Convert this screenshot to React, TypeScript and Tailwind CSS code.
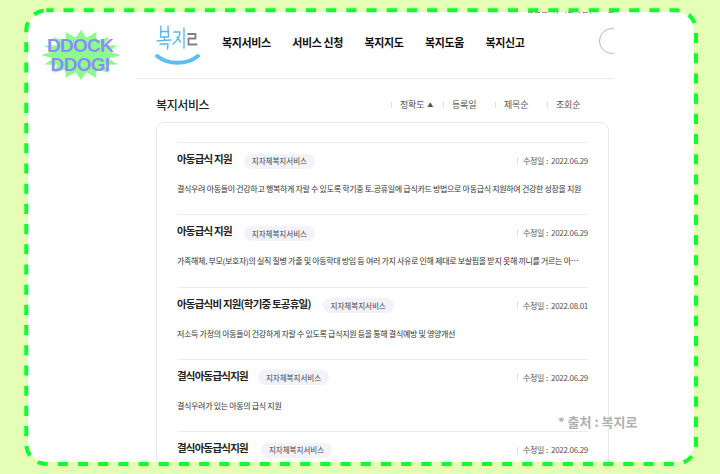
const items = [
  { t: "아동급식 지원", d: "결식우려 아동들이 건강하고 행복하게 자랄 수 있도록 학기중 토.공휴일에 급식카드 방법으로 아동급식 지원하여 건강한 성장을 지원", date: "2022.06.29" },
  { t: "아동급식 지원", d: "가족해체, 부모(보호자)의 실직 질병 가출 및 아동학대 방임 등 여러 가지 사유로 인해 제대로 보살핌을 받지 못해 끼니를 거르는 아동에게 급식을 지원", date: "2022.06.29" },
  { t: "아동급식비 지원(학기중 토공휴일)", d: "저소득 가정의 아동들이 건강하게 자랄 수 있도록 급식지원 등을 통해 결식예방 및 영양개선", date: "2022.08.01" },
  { t: "결식아동급식지원", d: "결식우려가 있는 아동의 급식 지원", date: "2022.06.29" },
  { t: "결식아동급식지원", d: "", date: "2022.06.29" },
];
const nav = ["복지서비스", "서비스 신청", "복지지도", "복지도움", "복지신고"];
const sorts = ["정확도", "등록일", "제목순", "조회순"];
const font = { fontFamily: '"Noto Sans CJK KR", "Noto Sans", sans-serif' };

function Starburst() {
  const pts: string[] = [];
  const n = 16;
  for (let i = 0; i < n * 2; i++) {
    const a = (Math.PI * i) / n - Math.PI / 2;
    const r = i % 2 === 0 ? 1 : 0.7;
    pts.push(`${40 + Math.cos(a) * 40 * r},${25 + Math.sin(a) * 25 * r}`);
  }
  return (
    <svg width="80" height="50" viewBox="0 0 80 50" className="absolute inset-0">
      <polygon points={pts.join(" ")} fill="#8cfc8c" />
    </svg>
  );
}

export default function App() {
  return (
    <div className="relative w-[720px] h-[474px] bg-[#e4ffb5] overflow-hidden" style={font}>
      <div className="absolute left-[28px] top-[12px] w-[666px] h-[450px] bg-white rounded-[18px] overflow-hidden">
        <div className="flex h-full">
          <div className="w-[108px] shrink-0 pt-[18px] pl-[13px]">
            <div className="relative w-[80px] h-[50px]">
              <Starburst />
              <div className="absolute inset-0 flex flex-col items-center justify-center -translate-x-[1px] text-[#8a8fff] font-bold text-[19px] leading-[19px] tracking-[-0.7px]" style={{ fontFamily: '"Liberation Sans", sans-serif' }}>
                <span>DDOCK</span>
                <span>DDOGI</span>
              </div>
            </div>
          </div>
          <div className="w-[478px] shrink-0 relative overflow-hidden">
            <span className="absolute right-0 top-[-9px] text-[8px] leading-[12px] text-[#555] tracking-[-0.3px] whitespace-nowrap">통합검색 | 회원가입 | 로그인</span>
            <header className="flex h-[67px] items-center border-b border-[#ececec] relative">
              <div className="w-[86px] pl-[18px] shrink-0">
                <svg width="48" height="44" viewBox="0 0 48 44">
                  <g fill="none" strokeLinecap="round" strokeLinejoin="round" strokeWidth="1.4">
                    <path d="M7 3l-.5 11M14 3l.5 11M6.500 8.500h8M6.500 14h8M10.500 14v3.500M3 18c4-.5 9-.8 14-1M6 21h8l-.5 5" stroke="#5bb8e8" />
                    <path d="M20 9h6c-.5 5-3 9-7 12M23 14l3.500 5M30 5v20" stroke="#5bb8e8" />
                    <path d="M34 11h7.500v4.500h-7v6h8" stroke="#7f7f8a" strokeWidth="1.8" />
                  </g>
                  <path d="M3 33c11 9 30 9 41 0" fill="none" stroke="#5cbff0" strokeWidth="4" strokeLinecap="round" />
                </svg>
              </div>
              <nav className="flex gap-[21.6px] text-[11px] font-bold text-[#111] tracking-[-0.4px] whitespace-nowrap -mt-[5px]">
                {nav.map((n) => <span key={n}>{n}</span>)}
              </nav>
              <div className="absolute left-[463px] top-[16px] w-[26px] h-[26px] rounded-full border border-[#a9b4ee]" />
            </header>
            <main className="pl-[20px] pr-[5px]">
              <div className="flex items-center justify-between h-[43px] pt-[9px]">
                <h2 className="text-[12px] font-medium text-[#222] tracking-[-0.4px]">복지서비스</h2>
                <div className="flex text-[9px] text-[#555] tracking-[-0.2px] pr-[10px]">
                  {sorts.map((s, i) => (
                    <span key={s} className="w-[52px] flex items-center gap-[3px] whitespace-nowrap">
                      <span className="w-px h-[6px] bg-[#e0e0e0] mr-[5px]" />
                      {s}
                      {i === 0 && <span className="text-[6px] leading-none">▲</span>}
                    </span>
                  ))}
                </div>
              </div>
              <section className="border border-[#e8e8e8] rounded-[8px] px-[20px] pt-[19px] h-[400px]">
                {items.map((it, i) => (
                  <article key={i} className="border-t border-[#ececec] h-[72.25px] pt-[7px]">
                    <div className="flex items-center h-[18px]">
                      <h3 className="text-[10.5px] font-bold text-[#222] tracking-[-0.8px] whitespace-nowrap">{it.t}</h3>
                      <span className={`${i === 4 ? "ml-[13px]" : i === 3 ? "ml-[10px]" : "ml-[12px]"} mt-[4px] h-[15px] px-[8px] rounded-full bg-[#f3f2fa] text-[7.5px] text-[#444] flex items-center whitespace-nowrap`}>지자체복지서비스</span>
                      <span className="ml-auto mt-[4px] flex items-center text-[8px] text-[#555] tracking-[-0.3px] whitespace-nowrap">
                        <span className="w-px h-[7px] bg-[#ddd] mr-[5px]" />
                        수정일 <span className="ml-[2px] mr-[3px]">:</span>{it.date}
                      </span>
                    </div>
                    <p className="mt-[15px] pr-[5px] text-[8px] text-[#333] tracking-[-0.32px] truncate">{it.d}</p>
                  </article>
                ))}
              </section>
            </main>
          </div>
        </div>
        <span className="absolute left-[530px] top-[400px] text-[13px] font-bold text-[#b0b0b0] whitespace-nowrap">* 출처 : 복지로</span>
      </div>
      <svg width="720" height="474" className="absolute inset-0 pointer-events-none">
        <rect x="26.3" y="10.3" width="669.7" height="453.7" rx="20" fill="none" stroke="#0dff2d" strokeWidth="4" strokeDasharray="10.1 10.1" strokeDashoffset="3" />
      </svg>
    </div>
  );
}
